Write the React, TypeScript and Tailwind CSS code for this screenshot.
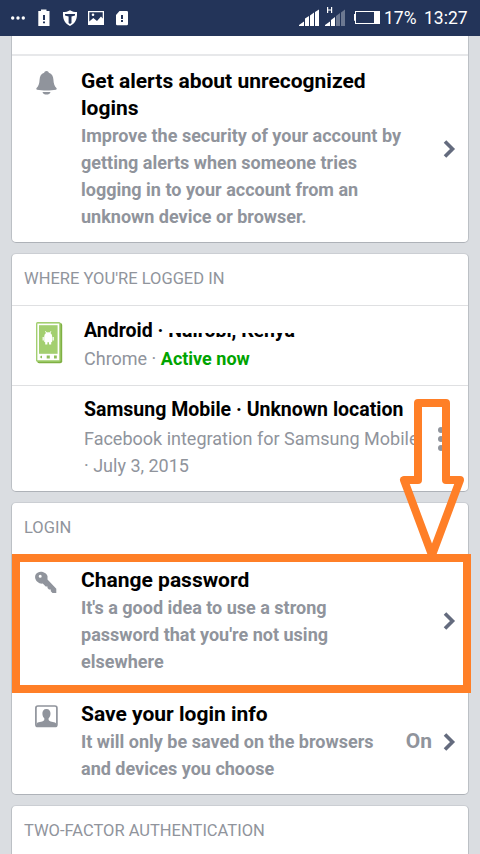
import type { ReactNode } from "react";

function Card({ children, className = "" }: { children: ReactNode; className?: string }) {
  return (
    <section className={`box-border shrink-0 border border-t-[#cbced3] border-r-[#bcc0c5] border-b-[#aeb2b8] border-l-[#bcc0c5] bg-white ${className}`}>
      {children}
    </section>
  );
}

function Heading({ children }: { children: ReactNode }) {
  return <h2 className="flex h-[51px] items-center pb-[2px] pl-3 text-[16.5px] leading-[27px] font-normal whitespace-nowrap text-[#90949c]">{children}</h2>;
}

function Chevron() {
  return (
    <svg className="mr-[12px] h-[20px] w-[14px] shrink-0" viewBox="0 0 14 20">
      <path d="M3 2.5 L10.5 10 L3 17.5" fill="none" stroke="#646b7e" strokeWidth="3.6" />
    </svg>
  );
}

function Lines({ items }: { items: string[] }) {
  return (
    <>
      {items.map((t) => (
        <span key={t} className="block whitespace-nowrap">{t}</span>
      ))}
    </>
  );
}

function SettingRow({ icon, title, text, value }: { icon: ReactNode; title: string[]; text: string[]; value?: string }) {
  return (
    <div className="flex py-3">
      <div className="w-[69px] shrink-0 pl-[22px]">{icon}</div>
      <div className="min-w-0 flex-1">
        <h3 className="text-[21px] leading-[27px] font-bold text-black"><Lines items={title} /></h3>
        <p className="text-[18px] leading-[27px] font-bold text-[#90949c]"><Lines items={text} /></p>
      </div>
      <div className="flex items-center">
        {value && <span className="mr-[10px] text-[21px] font-bold text-[#90949c]">{value}</span>}
        <Chevron />
      </div>
    </div>
  );
}

function BellIcon() {
  return (
    <svg className="mt-[3px] h-6 w-6" viewBox="0 0 24 24" fill="#90949c">
      <path d="M12.5 0 C11.2 0 10.5 .7 10.2 1.8 C7 3 5.8 5.3 5.6 8.5 C5.4 12.2 4.6 15.2 2.6 17 C2 17.6 2.2 18.5 3 18.8 C8 19.8 17 19.8 22 18.8 C22.8 18.5 23 17.6 22.4 17 C20.4 15.2 19.6 12.2 19.4 8.5 C19.2 5.3 18 3 14.8 1.8 C14.5 .7 13.8 0 12.5 0Z M8.5 20.9 H16.5 C15.7 24.5 9.3 24.5 8.5 20.9Z" />
    </svg>
  );
}

function KeyIcon() {
  return (
    <svg className="mt-[4px] h-6 w-6" viewBox="0 0 24 24">
      <path fill="#90949c" fillRule="evenodd" d="M4 1.5 C7-.5 12.5 1.7 13.5 5 L13.5 8.5 L22.3 17.8 V22 H18.5 L16.8 20.3 V18.6 H15 L13.5 17 V15.4 H11.7 L8.7 12.6 C5 13 1.4 10 1.1 6.5 C.9 4.2 2 2.6 4 1.5Z M6.2 3.8 A1.5 1.5 0 1 0 6.2 6.8 A1.5 1.5 0 1 0 6.2 3.8Z" />
    </svg>
  );
}

function ProfileIcon() {
  return (
    <svg className="mt-[4px] h-6 w-6" viewBox="0 0 24 24">
      <rect x="1.9" y="1" width="21" height="20.4" rx="2" fill="none" stroke="#90949c" strokeWidth="1.7" />
      <path fill="#90949c" d="M12.4 3.9 C9.6 3.9 8.2 6 8.4 8.7 C8.5 10.8 9.3 12.3 10.3 13.2 V15 C9.7 16.8 4.8 16.7 3 18 L2 21.5 H22.8 L21.8 18 C20 16.7 15.2 16.8 14.6 15 V13.2 C15.6 12.3 16.4 10.8 16.5 8.7 C16.7 6 15.2 3.9 12.4 3.9Z" />
    </svg>
  );
}

function AndroidPhone() {
  return (
    <svg className="-mt-px h-[42px] w-[27px]" viewBox="0 0 27 42">
      <rect x="1.2" y="1" width="25" height="40.2" rx="2" fill="#7fb043" />
      <rect x="0" y="0" width="24.6" height="39.8" rx="1.5" fill="#a3cf70" />
      <rect x="1.4" y="1.6" width="21.8" height="36.6" fill="#fff" />
      <rect x="3" y="3.2" width="18.6" height="28.6" fill="#a3cf70" />
      <path fill="#fff" d="M8.2 15 C8.2 8.8 16.2 8.8 16.2 15Z M8.2 15.1 H16.2 V19.5 Q16.2 20.3 15.2 20.3 V22.5 H13 V20.3 H11.4 V22.5 H9.2 V20.3 Q8.2 20.3 8.2 19.5Z M6.6 15 H7.8 V18.5 H6.6Z M16.6 15 H17.8 V18.5 H16.6Z M9 9.5 L9.7 9 L10.9 11 H10Z M15.4 9.5 L14.7 9 L13.5 11 H14.4Z" />
      <path fill="#8fbd5d" d="M3.6 35 L6 33.4 V36.6Z M10.7 33.5 H13.8 V36.5 H10.7Z M18 33.5 H20.8 V36.5 H18Z" />
    </svg>
  );
}

function StatusBar() {
  return (
    <header className="flex h-9 shrink-0 items-center bg-[#233459] text-white">
      <svg className="h-9 w-[140px]" viewBox="0 0 140 36" fill="#fff">
        <circle cx="12.7" cy="18" r="1.7" /><circle cx="18" cy="18" r="1.7" /><circle cx="23.3" cy="18" r="1.7" />
        <path fillRule="evenodd" d="M41 9.5 H46.5 V11 H49.5 V26 H38.3 V11 H41Z M43 15 V20 H45 V15Z M43 21.5 V23.3 H45 V21.5Z" />
        <path fillRule="evenodd" d="M70 10.3 C72 11.7 74.5 12 77 12 C77.3 18.5 76 23 70 26 C64 23 62.7 18.5 63 12 C65.5 12 68 11.7 70 10.3Z M65 14 V15.5 L68.6 16.5 V23 L70 24 L71.5 23 V16.5 L75 15.5 V14Z" />
        <path fillRule="evenodd" d="M88 11 H104 V25 H88Z M89.3 12.3 V21.5 L93.3 18 L97 21 L101 16.5 L102.7 18.5 V12.3Z" />
        <circle cx="93" cy="14.8" r="1.3" />
        <path fillRule="evenodd" d="M119.5 11 H126.8 Q128 11 128 12.2 V24 Q128 25.3 126.8 25.3 H117.2 Q116 25.3 116 24 V15Z M121 15 V19 H123 V15Z M121 20 V22 H123 V20Z" />
      </svg>
      <div className="flex-1" />
      <svg className="h-9 w-[84px]" viewBox="297 0 84 36" fill="#fff">
        <path d="M299 26 V25 L304 21.5 V26Z M305 26 V18.5 L309 16 V26Z M310 26 V15.5 L314 12.5 V26Z M315 26 V12 L319 9.5 V26Z M325 26 V25 L330 21.5 V26Z M331 26 V20 L335 17 V26Z" />
        <path fill="#6c7891" d="M336 26 V16 L340 13 V26Z M341 26 V12.5 L345 9.5 V26Z" />
        <path d="M327 7 H328.2 V9.5 H331 V7 H332.2 V13 H331 V10.6 H328.2 V13 H327Z" />
        <path fillRule="evenodd" d="M355 11 H380 V24 H355 V20.8 H354 V14 H355Z M356 12 V23 H374 V12Z" />
      </svg>
      <span className="ml-[3px] w-[40px] text-[17.5px] whitespace-nowrap">17%</span>
      <span className="w-[56px] text-[17.5px] whitespace-nowrap">13:27</span>
    </header>
  );
}

export default function App() {
  return (
    <main className="relative flex h-[854px] w-[480px] flex-col overflow-hidden bg-[#dadde1] font-['Roboto',sans-serif]">
      <StatusBar />
      <div className="flex flex-col gap-[10px] pr-[11px] pl-[11px]">
        <Card className="h-[207px] rounded-b-[5px] border-t-0">
          <div className="h-[20px] border-b-2 border-[#e7e8ea]" />
          <SettingRow icon={<BellIcon />} title={["Get alerts about unrecognized", "logins"]} text={["Improve the security of your account by", "getting alerts when someone tries", "logging in to your account from an", "unknown device or browser."]} />
        </Card>

        <Card className="h-[239px] rounded-[5px]">
          <Heading>WHERE YOU'RE LOGGED IN</Heading>
          <div className="flex h-[80px] border-t border-[#dfe0e2]">
            <div className="w-[72px] shrink-0 pt-[17px] pl-[24px]"><AndroidPhone /></div>
            <div className="pt-[11px] whitespace-nowrap">
              <div className="relative w-fit text-[19.5px] leading-[27px] font-bold text-black">
                Android · Nairobi, Kenya
                <span className="absolute top-[2px] left-[82px] h-[14px] w-[140px] bg-white" />
              </div>
              <div className="mt-px text-[18px] leading-[27px] text-[#90949c]">Chrome · <span className="font-bold text-[#00a400]">Active now</span></div>
            </div>
          </div>
          <div className="flex h-[105px] border-t border-[#dfe0e2]">
            <div className="w-[72px] shrink-0" />
            <div className="w-[340px] pt-[10px] whitespace-nowrap">
              <div className="text-[19.5px] leading-[27px] font-bold text-black">Samsung Mobile · Unknown location</div>
              <div className="mt-[2px] text-[18px] leading-[27px] text-[#90949c]"><Lines items={["Facebook integration for Samsung Mobile", "· July 3, 2015"]} /></div>
            </div>
            <div className="flex flex-col gap-[3px] pt-[41px] pl-[14px]">
              <i className="size-[6px] rounded-full bg-[#90949c]" /><i className="size-[6px] rounded-full bg-[#90949c]" /><i className="size-[6px] rounded-full bg-[#90949c]" />
            </div>
          </div>
        </Card>

        <Card className="h-[293px] rounded-[5px]">
          <Heading>LOGIN</Heading>
          <div className="border-t border-[#dfe0e2]">
            <SettingRow icon={<KeyIcon />} title={["Change password"]} text={["It's a good idea to use a strong", "password that you're not using", "elsewhere"]} />
          </div>
          <div className="border-t-2 border-[#dfe0e2]">
            <SettingRow icon={<ProfileIcon />} title={["Save your login info"]} text={["It will only be saved on the browsers", "and devices you choose"]} value="On" />
          </div>
        </Card>

        <Card className="h-[60px] rounded-t-[5px]">
          <Heading>TWO-FACTOR AUTHENTICATION</Heading>
        </Card>
      </div>

      <div className="absolute top-[554px] left-[12px] h-[139px] w-[459px] border-8 border-[#ff7f27]" />
      <svg className="absolute top-[390px] left-[390px] h-[180px] w-[90px]" viewBox="390 390 90 180">
        <path d="M418 403 H446 V480 H460 L432 555 L404 480 H418Z" fill="none" stroke="#ff7f27" strokeWidth="8" strokeLinejoin="round" />
      </svg>
    </main>
  );
}
